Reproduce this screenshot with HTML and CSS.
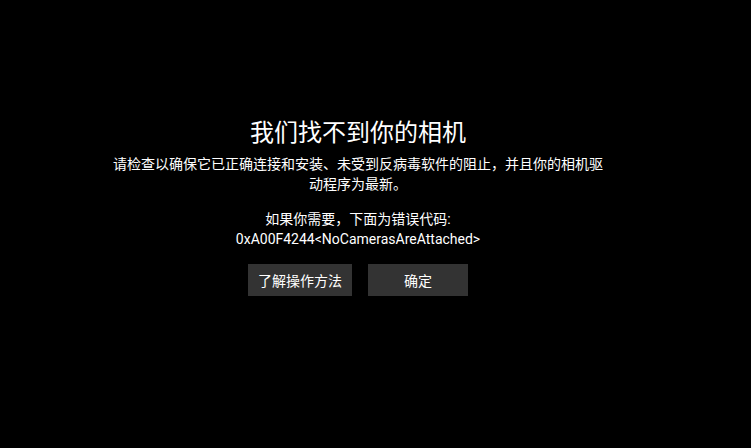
FILE: index.html
```html
<!DOCTYPE html>
<html lang="zh-CN">
<head>
<meta charset="utf-8">
<link rel="stylesheet" href="styles.css">
</head>
<body>
<main class="page">
  <section class="panel">
    <h1 class="title">我们找不到你的相机</h1>
    <p class="desc">请检查以确保它已正确连接和安装、未受到反病毒软件的阻止，并且你的相机驱动程序为最新。</p>
    <p class="code">如果你需要，下面为错误代码:<br>0xA00F4244&lt;NoCamerasAreAttached&gt;</p>
    <div class="actions">
      <button class="btn">了解操作方法</button>
      <button class="btn btn-ok">确定</button>
    </div>
  </section>
</main>
</body>
</html>
```
FILE: styles.css
```css
html, body {
  margin: 0;
  padding: 0;
  background: #000;
  height: 100%;
}
body {
  font-family: "Noto Sans CJK SC", "Noto Sans", sans-serif;
  color: #fff;
}
.page {
  display: flex;
  justify-content: center;
  width: 751px;
  height: 448px;
  padding-right: 35px;
  padding-top: 115px;
  box-sizing: border-box;
}
.panel {
  width: 496px;
  display: flex;
  flex-direction: column;
  align-items: center;
  text-align: center;
}
.title {
  margin: 0;
  font-size: 24px;
  font-weight: 400;
  line-height: 32px;
}
.desc {
  margin: 6px 0 0;
  font-size: 14px;
  line-height: 20px;
}
.code {
  margin: 16px 0 0;
  font-family: Roboto, "Noto Sans CJK SC", sans-serif;
  font-size: 14px;
  line-height: 20px;
}
.actions {
  display: flex;
  gap: 16px;
  margin-top: 15px;
}
.btn {
  height: 32px;
  min-width: 100px;
  padding: 0 10px;
  border: none;
  background: #333;
  color: #fff;
  font-family: inherit;
  font-size: 14px;
  line-height: 32px;
}
```
